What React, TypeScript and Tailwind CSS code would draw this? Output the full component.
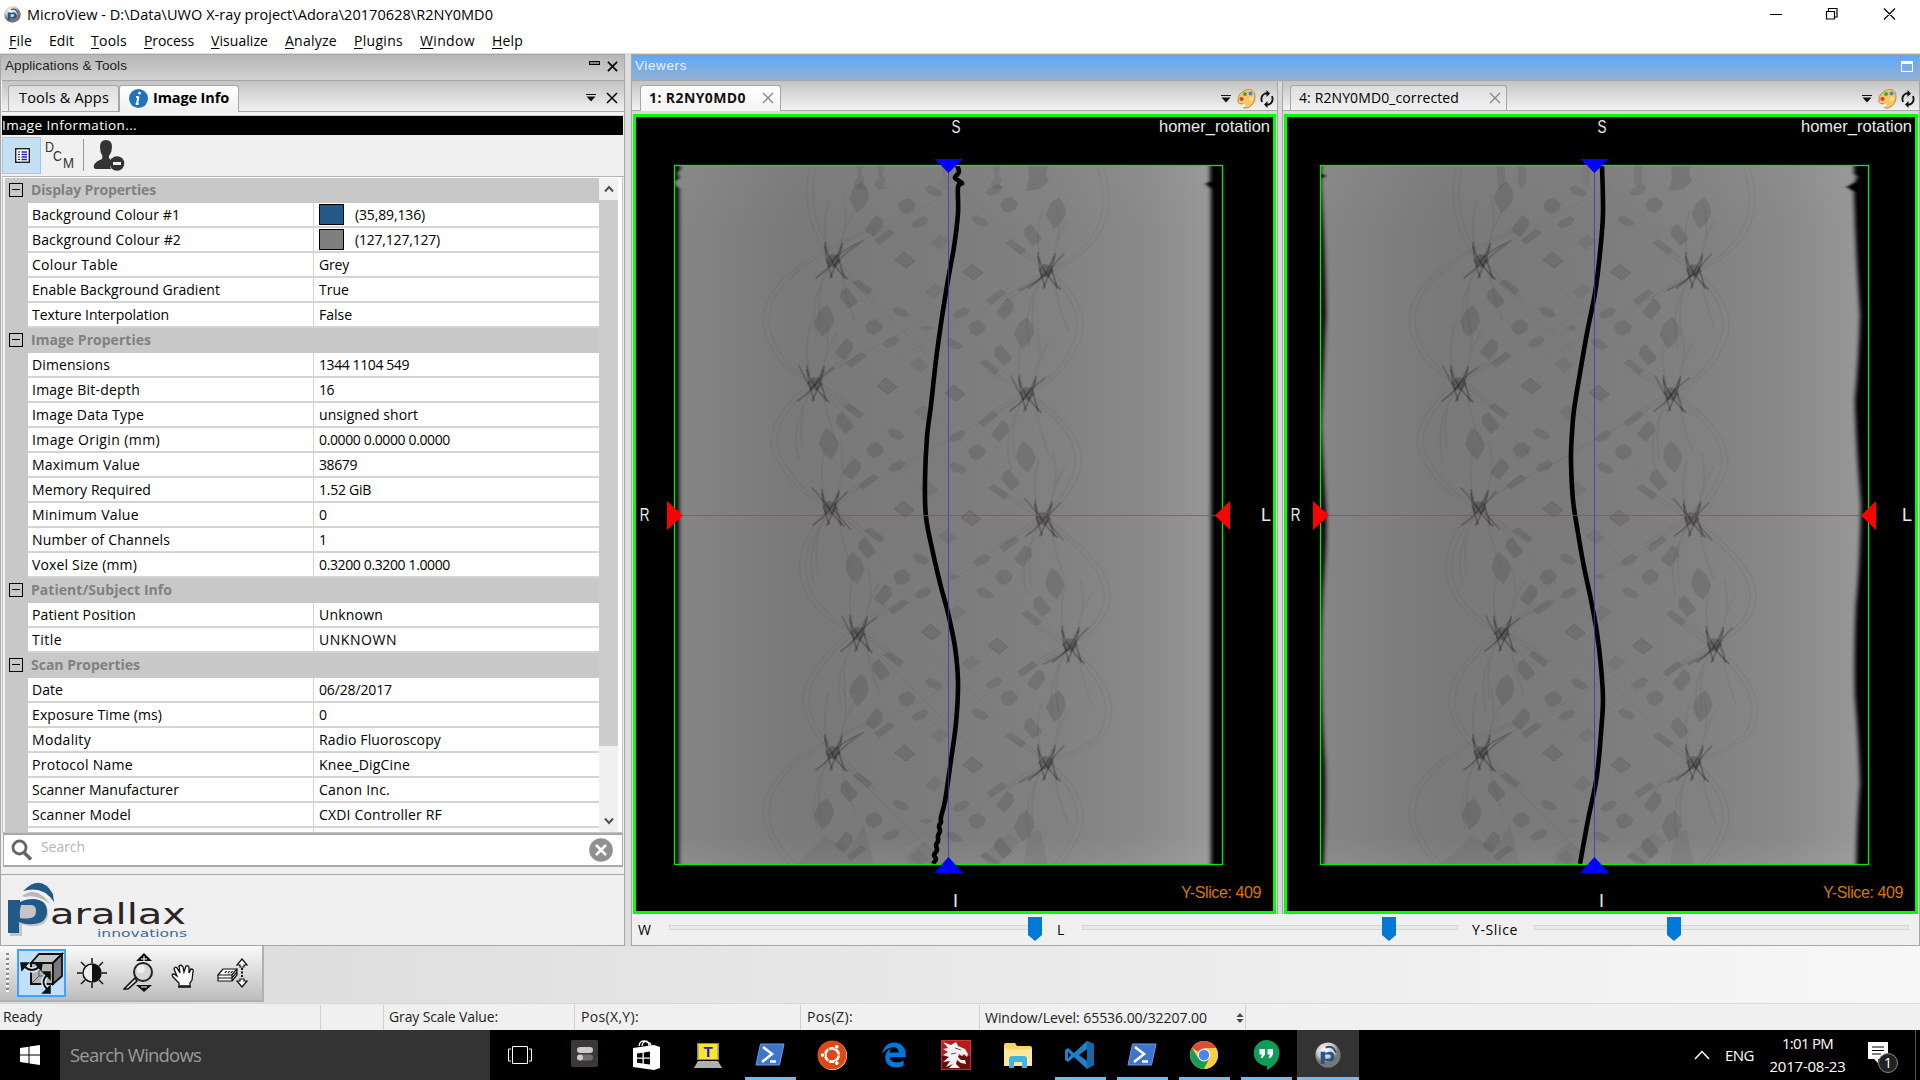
import { useLayoutEffect, useRef } from "react";
import type { ReactNode } from "react";
import { FaEdgeLegacy, FaUbuntu } from "react-icons/fa";

/* Text run whose tracking is adjusted so that it spans a given width. */
function T({ w, className = "", children }: { w: number; className?: string; children: ReactNode }) {
  const ref = useRef<HTMLSpanElement>(null);
  useLayoutEffect(() => {
    const el = ref.current;
    if (!el) return;
    el.style.letterSpacing = "0px";
    const n = (el.textContent || "").length;
    el.style.letterSpacing = `${(w - el.getBoundingClientRect().width) / n}px`;
  }, [w, children]);
  return (
    <span ref={ref} className={"inline-block whitespace-pre " + className}>
      {children}
    </span>
  );
}

type Pt = [number, number];

function smooth(pts: Pt[]): string {
  let d = `M${pts[0][0]} ${pts[0][1]}`;
  for (let i = 0; i < pts.length - 1; i++) {
    const p0 = pts[Math.max(0, i - 1)];
    const p1 = pts[i];
    const p2 = pts[i + 1];
    const p3 = pts[Math.min(pts.length - 1, i + 2)];
    d += `C${(p1[0] + (p2[0] - p0[0]) / 6).toFixed(1)} ${(p1[1] + (p2[1] - p0[1]) / 6).toFixed(1)} ${(p2[0] - (p3[0] - p1[0]) / 6).toFixed(1)} ${(p2[1] - (p3[1] - p1[1]) / 6).toFixed(1)} ${p2[0]} ${p2[1]}`;
  }
  return d;
}

/* t: tall, r: round, s: small, b: block, p: parallelogram, d: diamond, o: outlined diamond, y: tiny */
type Kind = "t" | "r" | "s" | "b" | "p" | "d" | "o" | "y";
type Blob = [Kind, number, number, number];

const BASE: Blob[] = [
  ["t", 185, 32, -1], ["r", 233, 41, 1], ["s", 260, 26, 1], ["s", 320, 25, -1], ["r", 335, 40, 1],
  ["s", 246, 57, -1], ["s", 306, 56, 1], ["t", 382, 48, -1], ["b", 201, 61, -1], ["p", 210, 72, -1],
  ["d", 266, 77, -1], ["b", 358, 70, 1], ["p", 342, 82, 1], ["o", 231, 95, 1], ["o", 299, 107, 1],
  ["p", 189, 122, 1], ["b", 174, 133, 1], ["d", 261, 126, -1], ["p", 322, 132, -1], ["b", 332, 144, -1],
  ["t", 150, 156, -1], ["s", 227, 147, 1], ["r", 200, 162, 1], ["s", 287, 148, -1], ["y", 252, 163, 1],
  ["r", 303, 163, 1], ["s", 217, 177, -1], ["s", 280, 179, 1], ["t", 350, 168, -1], ["b", 171, 184, -1],
  ["p", 182, 195, -1], ["d", 245, 200, 1], ["b", 328, 190, 1], ["p", 316, 202, 1], ["o", 213, 221, 1],
  ["o", 281, 228, 1], ["p", 180, 246, 1], ["b", 170, 258, 1], ["d", 249, 248, 1], ["p", 314, 254, -1],
  ["b", 327, 266, -1], ["t", 155, 279, 1], ["s", 222, 269, 1], ["s", 283, 271, -1], ["r", 201, 285, 1],
  ["r", 303, 287, 1], ["t", 352, 292, 1], ["s", 223, 301, -1], ["s", 284, 303, 1], ["b", 179, 304, -1],
  ["p", 194, 317, -1], ["d", 255, 324, 1], ["b", 336, 315, 1], ["p", 325, 327, 1], ["o", 230, 344, 1],
  ["o", 297, 353, 1], ["p", 201, 370, 1], ["d", 273, 372, 1], ["p", 335, 379, -1], ["b", 192, 383, 1],
  ["b", 350, 391, -1], ["s", 247, 394, 1], ["s", 308, 395, -1], ["t", 181, 403, 1], ["r", 228, 412, 1],
  ["r", 330, 412, 1], ["y", 280, 412, 1], ["t", 381, 419, 1], ["s", 249, 428, -1], ["s", 311, 428, 1],
  ["b", 210, 430, -1], ["p", 224, 442, -1], ["d", 283, 448, -1], ["b", 367, 441, 1], ["p", 358, 453, 1],
  ["o", 257, 467, 1], ["o", 324, 481, 1], ["p", 220, 494, 1], ["b", 206, 505, 1], ["d", 297, 498, -1],
  ["p", 353, 504, -1], ["b", 363, 515, -1],
];
const BLOBS: Blob[] = [
  ...BASE,
  ...BASE.filter((b) => b[2] < 206).map((b): Blob => [b[0], b[1], b[2] + 493, b[3]]),
];

const SHAPES: Record<Kind, { d: string; o: number }> = {
  t: { d: "M-3 -16L5 -10L10 1L7 8L2 16L-6 9L-10 0L-8 -9Z", o: 0.1 },
  r: { d: "M-9 -1L-5 -6L2 -8L9 -2L7 4L0 8L-6 6Z", o: 0.1 },
  s: { d: "M-9 -3L-4 -6L5 -2L9 3L4 6L-5 3Z", o: 0.09 },
  b: { d: "M-7 -7L-1 -11L10 3L8 6L1 11L-8 0Z", o: 0.11 },
  p: { d: "M-11 -4L-5 -8L10 3L5 8Z", o: 0.1 },
  d: { d: "M-10 -1L0 -8L10 1L1 8Z", o: 0.06 },
  o: { d: "M-10 0L-1 -8L10 1L1 8Z", o: 0.09 },
  y: { d: "M-7 0L0 -3L7 0L0 3Z", o: 0.08 },
};

const STARS: [number, number, number][] = [
  [159, 96, 1], [372, 106, -1], [141, 219, 0], [353, 229, 0], [156, 343, 2], [369, 354, 2],
  [184, 469, 0], [396, 480, -1], [159, 588, 1], [372, 598, -1],
];

const WIRE1: Pt[] = [
  [283, 0], [285, 7], [281, 13], [288, 18], [284, 22], [284, 48], [280, 82], [274, 115], [268, 152],
  [262, 195], [257, 240], [253, 272], [251, 315], [252, 352], [259, 388], [267, 422], [274, 448],
  [281, 482], [284, 518], [282, 558], [276, 602], [271, 636], [267, 652], [267, 657], [265, 661],
  [266, 666], [264, 671], [264, 676], [262, 680], [263, 685], [260, 690], [262, 694], [259, 699],
];
const WIRE2: Pt[] = [
  [282, 0], [283, 48], [280, 88], [275, 128], [267, 168], [260, 208], [254, 245], [252, 268], [251, 295],
  [253, 335], [258, 368], [264, 402], [271, 435], [277, 468], [281, 502], [283, 535], [281, 568],
  [278, 602], [275, 622], [268, 655], [260, 699],
];
const LEFT_ARCS = [
  "M136 0Q124 56 159 96Q176 116 196 134",
  "M196 64Q60 118 97 182Q110 208 141 219Q160 232 178 246",
  "M178 190Q70 254 106 300Q122 328 156 343Q180 360 196 376",
  "M186 318Q106 374 132 428Q150 458 184 469Q206 480 222 496",
  "M214 440Q108 508 134 556Q142 574 159 588Q176 606 196 626",
  "M196 556Q60 610 97 674Q104 688 116 699",
];
const RIGHT_ARCS = [
  "M429 0Q450 62 398 96Q380 104 332 136",
  "M346 84Q430 136 402 184Q390 212 353 229L318 250",
  "M318 206Q430 266 402 316Q392 338 369 354L330 380",
  "M328 326Q462 402 430 452Q420 468 396 480L352 506",
  "M360 456Q462 520 430 570Q412 586 372 598L332 626",
  "M346 576Q430 628 402 676Q396 690 386 699",
];

function driftAt(y: number): number {
  const k: Pt[] = [[0, -3], [96, 2], [219, -2], [343, 3], [469, -2], [588, 2], [700, 1]];
  for (let i = 0; i < k.length - 1; i++) {
    if (y <= k[i + 1][0]) {
      const f = (y - k[i][0]) / (k[i + 1][0] - k[i][0]);
      return k[i][1] + f * (k[i + 1][1] - k[i][1]);
    }
  }
  return 0;
}

function Scan({ id, ox, oy, corrected, width }: { id: string; ox: number; oy: number; corrected?: boolean; width: number }) {
  const dx = (y: number) => (corrected ? driftAt(y) : 0);
  return (
    <svg className="block" width={width} height={794} viewBox={`0 0 ${width} 794`}>
      <defs>
        <linearGradient id={id + "g"}>
          <stop offset="0" stopColor="#868686" />
          <stop offset="0.1" stopColor="#808080" />
          <stop offset="0.22" stopColor="#797979" />
          <stop offset="0.45" stopColor="#7b7b7b" />
          <stop offset="0.7" stopColor="#818181" />
          <stop offset="0.85" stopColor="#898989" />
          <stop offset="0.98" stopColor="#979797" />
        </linearGradient>
        <linearGradient id={id + "v"} x2="0" y2="1">
          <stop offset="0" stopColor="#fff" stopOpacity="0.03" />
          <stop offset="0.1" stopColor="#fff" stopOpacity="0" />
          <stop offset="0.96" stopColor="#fff" stopOpacity="0" />
          <stop offset="1" stopColor="#fff" stopOpacity="0.07" />
        </linearGradient>
        <filter id={id + "s"} x="-5%" y="-5%" width="110%" height="110%">
          <feGaussianBlur stdDeviation="0.7" />
        </filter>
        <filter id={id + "e"} x="-300%" y="-2%" width="700%" height="104%">
          <feGaussianBlur stdDeviation="2 0.6" />
        </filter>
        <clipPath id={id + "c"}>
          <rect x="0" y="0" width="548" height="699" />
        </clipPath>
      </defs>
      <g transform={`translate(${ox} ${oy})`}>
        <g clipPath={`url(#${id}c)`}>
          <rect width="548" height="699" fill={`url(#${id}g)`} />
          <rect width="548" height="699" fill={`url(#${id}v)`} />
          <g filter={`url(#${id}s)`} fill="#000">
            <g fill="none" stroke="#000" strokeOpacity="0.045" strokeWidth="1.6">
              {[...LEFT_ARCS, ...RIGHT_ARCS].map((d, i) => (
                <g key={i}>
                  <path d={d} />
                  <path d={d} transform={`translate(${i < 6 ? 6 : -6} 0)`} />
                </g>
              ))}
            </g>
            {STARS.map(([x, y], i) => (
              <g key={i} transform={`translate(${x + dx(y)} ${y})`} fill="none" stroke="#000">
                <g strokeOpacity="0.045" strokeWidth="2">
                  <path d="M-2 5Q-26 40 -16 76M-4 5Q-18 30 -12 66M8 12Q14 40 22 60" />
                  <path d="M3 -6Q18 -36 10 -66M-5 -10Q-12 -36 -4 -60M8 -16Q12 -36 22 -52" />
                </g>
                <path d={x < 250 ? "M8 8L112 112M10 -10L150 -86" : "M-8 -8L-118 -112M-10 8L-150 88"} strokeOpacity="0.045" />
              </g>
            ))}
            {[0, 21, 85, 137].map((x, i) => (
              <path
                key={i}
                fillOpacity={[0.08, 0.08, 0.04, 0.07][i]}
                transform={`translate(${x + dx(0)} 0)`}
                d={corrected
                  ? "M180 0H188V18L184 24L180 18Z"
                  : "M182 0L190 0L187 9L191 14L188 20L193 23L183 25L179 19L184 12Z"}
              />
            ))}
            <path d="M354 0H374L372 9L375 16L366 24L352 26L355 12Z" fillOpacity="0.1" transform={`translate(${dx(0)} 0)`} />
            {BLOBS.map(([k, x, y, s], i) => (
              <path
                key={i}
                d={SHAPES[k].d}
                fillOpacity={SHAPES[k].o}
                stroke={k === "o" ? "#000" : "none"}
                strokeOpacity="0.13"
                transform={`translate(${x + dx(y)} ${y}) scale(${s} 1)`}
              />
            ))}
            <path d="M122 699L150 672L176 682L190 660L200 699Z M232 692L250 676L264 688L256 699H236Z" fillOpacity="0.05" />
            <path d="M306 692L334 668L346 676L326 699Z M350 699L354 670L366 664L374 699Z" fillOpacity="0.05" />
          </g>
          {STARS.map(([x, y, v], i) => (
            <g key={i} transform={`translate(${x + dx(y)} ${y})`}>
              <g fill="none" stroke="#000" strokeLinecap="round" filter={`url(#${id}s)`}>
                <g strokeOpacity="0.22" strokeWidth="2">
                  <path d="M-8 -18Q-7 0 -1 16" />
                  <path d="M9 -17Q8 -6 -3 17" />
                  <path d="M8 -14Q2 4 -17 17" />
                  <path d="M-8 -14Q-2 4 14 18" />
                  <path d="M6 0Q9 8 11 17" />
                </g>
                {v === 0 && <path d="M18 -16Q6 -8 -4 5M-16 -18Q-10 -6 -7 0" strokeOpacity="0.18" strokeWidth="1.8" />}
                {v === 1 && <path d="M-4 2Q10 -12 30 -20M0 5Q14 -10 26 -17" strokeOpacity="0.18" strokeWidth="1.8" />}
                {v === -1 && <path d="M4 0Q-10 12 -26 19M18 -17Q8 -8 2 4" strokeOpacity="0.18" strokeWidth="1.8" />}
                {v === 2 && <path d="M-2 0Q-10 -12 -18 -20M4 2Q12 12 20 21M17 -16L4 -2" strokeOpacity="0.18" strokeWidth="1.8" />}
              </g>
              <path d="M-8 -1L-2 -7L5 -6L8 0L2 7L-5 5Z" fill="#000" fillOpacity="0.2" />
            </g>
          ))}
          <g filter={`url(#${id}e)`} fill="#000">
            {corrected ? (
              <>
                <path d="M-10 -10H1V8L5 11L1 14V24Q5 80 6 150Q4 190 1 260Q3 300 6 345Q7 370 4 410Q1 450 1 500Q2 560 5 600Q6 640 3 710H-10Z" />
                <path d="M560 -10H534V8L537 12L535 17L527 22L534 27Q536 90 540 150Q539 190 535 235Q536 280 541 340Q540 400 536 440Q534 490 535 530Q539 580 540 620Q537 650 536 710H560Z" />
              </>
            ) : (
              <>
                <path d="M-10 -10H6V4L3 8L5 13L0 17L1 20L5 24V710H-10Z" />
                <path d="M560 -10H536V16L532 19L537 24V710H560Z" />
              </>
            )}
          </g>
          <path d={smooth(corrected ? WIRE2 : WIRE1)} fill="none" stroke="#020202" strokeWidth="4.6" strokeLinejoin="round" />
        </g>
        <rect x="0.5" y="0.5" width="548" height="699" fill="none" stroke="#00ee00" strokeWidth="1.3" />
        <path d="M274.5 1V699" stroke="#3a35b4" strokeOpacity="0.75" />
        <path d="M0 350.5H548" stroke="#b83c3c" strokeOpacity="0.75" />
        <path d="M260.500 -6H288.500L274.500 8Z M260 708H289L274.500 692Z" fill="#00f" />
        <path d="M-7 336V365L9 350.5Z M556 336V365L541 350.5Z" fill="#f00" />
      </g>
    </svg>
  );
}

function Viewer({ id, width, ox, left, sx, rx, corrected }: {
  id: string; width: number; ox: number; left: number; sx: number; rx: number; corrected?: boolean;
}) {
  const vtk = "absolute font-['Liberation_Sans'] leading-none text-[#e8e8e8]";
  return (
    <div className="relative h-[800px] border-[3px] border-[#00ff00] bg-black" style={{ width: width + 6 }}>
      <Scan id={id} ox={ox} oy={48} corrected={corrected} width={width} />
      <span className={vtk + " top-[1px] text-[18px] scale-x-75"} style={{ left: sx }}>S</span>
      <span className={vtk + " top-[1px] right-[3px] text-[16.5px]"}><T w={111}>homer_rotation</T></span>
      <span className={vtk + " top-[389px] text-[18px] scale-x-75"} style={{ left }}>R</span>
      <span className={vtk + " top-[389px] text-[18px]"} style={{ left: rx }}>L</span>
      <span className={vtk + " top-[775px] text-[18px]"} style={{ left: sx + 3 }}>I</span>
      <span className={vtk + " top-[768px] right-[12px] text-[16px] !text-[#d87800]"}><T w={80}>Y-Slice: 409</T></span>
    </div>
  );
}

function MicroIcon({ size, id }: { size: number; id: string }) {
  return (
    <svg width={size} height={size} viewBox="0 0 32 32">
      <defs>
        <radialGradient id={id} cx="0.4" cy="0.3">
          <stop offset="0" stopColor="#fff" />
          <stop offset="0.7" stopColor="#c8c8c4" />
          <stop offset="1" stopColor="#777" />
        </radialGradient>
      </defs>
      <circle cx="16" cy="16" r="15.5" fill={`url(#${id})`} />
      <path d="M7 12H13V14Q15 11.500 19 12Q24 13 24 18Q24 23.500 18 24Q15 24 12 22V27H7ZM12.500 15.500V20.500H17Q19.500 20 19.500 18Q19.500 15.500 17 15.500Z" fill="#24568c" />
      <path d="M13 7Q22 3 26 13" stroke="#24568c" strokeWidth="2.500" fill="none" />
    </svg>
  );
}

function Palette() {
  return (
    <svg width="19" height="20" viewBox="0 0 19 20">
      <path d="M9 1C14 -1 18 2 18 8C18 15 12 20 7 19C5 18 8 16 6 15C3 14 1 16 1 11C1 6 4 3 9 1Z" fill="#f6c768" stroke="#b98a3c" />
      <circle cx="8" cy="5" r="2" fill="#3fa83a" />
      <circle cx="13.500" cy="4.500" r="2" fill="#4a7de0" />
      <circle cx="4.500" cy="10" r="2" fill="#e8381c" />
      <circle cx="14" cy="10" r="2" fill="#fbe48a" />
      <circle cx="7" cy="16.500" r="1.400" fill="#fff" />
    </svg>
  );
}

function Refresh() {
  return (
    <svg width="14" height="18" viewBox="0 0 14 18" fill="none" stroke="#111" strokeWidth="1.800">
      <path d="M2 12Q0 6 5 3.500H8M12 6Q14 12 9 14.500H6" />
      <path d="M6.500 0L10 3.500L6.500 7ZM7.500 11L4 14.500L7.500 18Z" fill="#111" stroke="none" />
    </svg>
  );
}

function Drop() {
  return (
    <svg width="10" height="8" viewBox="0 0 10 8">
      <path d="M0 0.500H10" stroke="#111" />
      <path d="M0.500 2.500H9.500L5 7.500Z" fill="#111" />
    </svg>
  );
}

function Cross({ s, c, w }: { s: number; c: string; w: number }) {
  return (
    <svg width={s} height={s} viewBox="0 0 12 12">
      <path d="M1 1L11 11M11 1L1 11" stroke={c} strokeWidth={w} />
    </svg>
  );
}

type Row = { h: string; w: number } | { n: string; nw: number; v: string; vw: number; c?: string };

const ROWS: Row[] = [
  { h: "Display Properties", w: 125 },
  { n: "Background Colour #1", nw: 148, v: "(35,89,136)", vw: 70, c: "#235988" },
  { n: "Background Colour #2", nw: 149, v: "(127,127,127)", vw: 85, c: "#7f7f7f" },
  { n: "Colour Table", nw: 86, v: "Grey", vw: 30 },
  { n: "Enable Background Gradient", nw: 188, v: "True", vw: 30 },
  { n: "Texture Interpolation", nw: 137, v: "False", vw: 33 },
  { h: "Image Properties", w: 120 },
  { n: "Dimensions", nw: 78, v: "1344 1104 549", vw: 90 },
  { n: "Image Bit-depth", nw: 108, v: "16", vw: 15 },
  { n: "Image Data Type", nw: 112, v: "unsigned short", vw: 99 },
  { n: "Image Origin (mm)", nw: 128, v: "0.0000 0.0000 0.0000", vw: 131 },
  { n: "Maximum Value", nw: 108, v: "38679", vw: 38 },
  { n: "Memory Required", nw: 119, v: "1.52 GiB", vw: 52 },
  { n: "Minimum Value", nw: 107, v: "0", vw: 8 },
  { n: "Number of Channels", nw: 138, v: "1", vw: 8 },
  { n: "Voxel Size (mm)", nw: 105, v: "0.3200 0.3200 1.0000", vw: 131 },
  { h: "Patient/Subject Info", w: 141 },
  { n: "Patient Position", nw: 104, v: "Unknown", vw: 64 },
  { n: "Title", nw: 30, v: "UNKNOWN", vw: 78 },
  { h: "Scan Properties", w: 109 },
  { n: "Date", nw: 31, v: "06/28/2017", vw: 73 },
  { n: "Exposure Time (ms)", nw: 130, v: "0", vw: 8 },
  { n: "Modality", nw: 59, v: "Radio Fluoroscopy", vw: 122 },
  { n: "Protocol Name", nw: 101, v: "Knee_DigCine", vw: 91 },
  { n: "Scanner Manufacturer", nw: 147, v: "Canon Inc.", vw: 71 },
  { n: "Scanner Model", nw: 99, v: "CXDI Controller RF", vw: 123 },
];

function PropertyGrid() {
  return (
    <div className="flex h-[654px] w-[618px] overflow-hidden bg-[#c8c8c8]">
      <div className="w-[594px] shrink-0">
        {ROWS.map((r, i) =>
          "h" in r ? (
            <div key={i} className="flex h-[25px] items-center pb-[2px]">
              <div className="flex w-[26px] pl-[4px]">
                <span className="flex h-[14px] w-[14px] items-center justify-center border border-black">
                  <span className="h-px w-[8px] bg-black" />
                </span>
              </div>
              <T w={r.w} className="font-bold text-[#808080]">{r.h}</T>
            </div>
          ) : (
            <div key={i} className="flex h-[25px] pl-[23px]">
              <div className="flex w-[286px] items-center border-b-2 border-r border-[#d4d4d4] bg-white pl-[4px]">
                <T w={r.nw}>{r.n}</T>
              </div>
              <div className="flex flex-1 items-center border-b-2 border-[#d4d4d4] bg-white pl-[5px]">
                {r.c && <span className="mr-[11px] h-[21px] w-[25px] border border-black" style={{ backgroundColor: r.c }} />}
                <T w={r.vw}>{r.v}</T>
              </div>
            </div>
          ),
        )}
        <div className="flex h-[25px] pl-[23px]">
          <div className="w-[286px] border-r border-[#d4d4d4] bg-white" />
          <div className="flex-1 bg-white" />
        </div>
      </div>
      <div className="flex w-[19px] flex-col items-center justify-between bg-[#f0f0f0]">
        <svg className="my-[7px] shrink-0" width="10" height="8" viewBox="0 0 10 8"><path d="M1 6.500L5 2L9 6.500" fill="none" stroke="#505050" strokeWidth="2" /></svg>
        <div className="h-[546px] w-full shrink-0 bg-[#cdcdcd]" />
        <div className="flex-1" />
        <svg className="mb-[7px] shrink-0" width="10" height="8" viewBox="0 0 10 8"><path d="M1 1.500L5 6L9 1.500" fill="none" stroke="#505050" strokeWidth="2" /></svg>
      </div>
      <div className="flex-1 bg-white" />
    </div>
  );
}

function ParallaxLogo() {
  return (
    <svg className="block" width="195" height="70" viewBox="0 0 195 70" fontFamily="DejaVu Sans">
      <g transform="translate(6 6)">
        <path d="M2 20H14V24Q18 19 26 19Q40 20 40 31Q40 43 28 44Q20 45 14 42V54H2Z" fill="#9a9a9a" opacity="0.5" transform="translate(1 1)" />
        <path d="M1 19H13V21Q18 18 27 18Q40 19 40 30Q40 42 27 43Q18 44 12 41V52H1ZM14 24Q12 30 13 37Q17 38 24 37Q29 36 29 30Q29 24 24 24Z" fill="#215988" fillRule="evenodd" />
        <path d="M16 10Q34 -8 46 13L47 21Q36 4 16 10Z" fill="#215988" />
        <path d="M15 15Q30 4 43 23Q30 13 18 16Z" fill="#b9b9b9" />
      </g>
      <text x="49" y="49" fontSize="28" fill="#2b2527" textLength="136" lengthAdjust="spacingAndGlyphs">arallax</text>
      <text x="96" y="62" fontSize="11" fill="#3c6c9b" textLength="90" lengthAdjust="spacingAndGlyphs">innovations</text>
    </svg>
  );
}

function ToolStrip() {
  return (
    <div className="flex h-[56px] w-[264px] items-center border-b-2 border-r-2 border-[#b0b0b0] bg-gradient-to-b from-[#fafafa] to-[#bdbdbd]">
      <div className="ml-[6px] mr-[8px] h-[40px] w-[3px] bg-[repeating-linear-gradient(#888_0_2px,#fff_2px_4px,transparent_4px_5px)]" />
      <div className="flex h-[48px] w-[49px] shrink-0 items-center justify-center border-2 border-[#45a1f8] bg-[#c2dffc]">
        <svg width="44" height="42" viewBox="0 0 44 42" fill="none" stroke="#111" strokeWidth="1.500">
          <path d="M11 11H33V32H11Z" fill="#b4b4b4" strokeWidth="2" />
          <path d="M11 11L19 2H42L33 11Z" fill="#c8c8c8" strokeWidth="1.800" />
          <path d="M33 11L42 2V24L33 32Z" fill="#7a7a7a" strokeWidth="1.800" />
          <path d="M19 12V24H32M19 24L12 31" stroke="#555" strokeWidth="1" />
          <path d="M4 14Q12 22 20 14" stroke="#dbe8f5" strokeWidth="5" /><path d="M4 14Q12 22 20 14" strokeWidth="1.800" />
          <path d="M1 11H8L2 18ZM22 11H15L21 18Z" fill="#111" />
          <path d="M27 23Q20 30 27 37" stroke="#dbe8f5" strokeWidth="5" /><path d="M27 23Q20 30 27 37" strokeWidth="1.800" />
          <path d="M23 20H30V27ZM23 41H30V34Z" fill="#111" />
        </svg>
      </div>
      <svg className="ml-[10px] shrink-0" width="32" height="32" viewBox="0 0 32 32">
        <g stroke="#111" strokeWidth="1.500"><path d="M16 1V6M16 26V31M1 16H6M26 16H31M5 5L9 9M23 23L27 27M27 5L23 9M9 23L5 27" /></g>
        <circle cx="16" cy="16" r="9" fill="#eee" stroke="#111" strokeWidth="1.500" />
        <path d="M16 7A9 9 0 0 1 16 25Z" fill="#111" />
      </svg>
      <svg className="ml-[15px] shrink-0" width="32" height="40" viewBox="0 0 32 40">
        <path d="M21 0L29 8H13ZM21 39L29 32H13Z" fill="#111" />
        <path d="M21 3V8M18 6H24M18 34H24" stroke="#fff" strokeWidth="1" />
        <path d="M1 36L12 25L14 28L5 36Z" fill="#ddd" stroke="#111" strokeWidth="1.500" />
        <circle cx="20" cy="19" r="9" fill="#d6d6d6" stroke="#222" strokeWidth="2" />
        <circle cx="18" cy="16" r="4" fill="#f0f0f0" />
      </svg>
      <svg className="ml-[16px] mt-[5px] shrink-0" width="24" height="24" viewBox="0 0 24 24">
        <path d="M8 22V19L2 13Q0 10 3 10L6 12L3 5Q4 2 6 4L9 9L8 2Q10 0 12 3L13 8L15 2Q18 1 18 4V9L20 5Q23 5 22 8L21 16L19 19V22Z" fill="#fff" stroke="#111" strokeWidth="1.300" />
        <path d="M7 23H20" stroke="#111" strokeWidth="1.500" />
      </svg>
      <svg className="ml-[22px] shrink-0" width="32" height="30" viewBox="0 0 32 30" fill="#fff" stroke="#111" strokeWidth="1.200">
        <path d="M1 17L6 11H20L15 17ZM1 17V23H15V17M1 20H15L20 14V11M15 23L20 17V14" />
        <path d="M8 15L9.500 13M11 15L12.500 13M14 15L15.500 13" />
        <path d="M25 1L30 7H27V9H23V7H20ZM25 29L30 23H27V21H23V23H20Z" />
        <path d="M25 10V20" strokeDasharray="2 1.500" strokeWidth="2" />
      </svg>
    </div>
  );
}

function Slider({ label, lw, w, x, mx }: { label: string; lw: number; w: number; x: number; mx: string }) {
  return (
    <div className="flex items-center">
      <T w={lw} className={mx}>{label}</T>
      <div className="relative mb-[4px] h-[5px] border border-[#d6d6d6] bg-[#e7eaea]" style={{ width: w }}>
        <svg className="absolute -top-[9px]" style={{ left: x }} width="14" height="24" viewBox="0 0 14 24">
          <path d="M0 0H14V18L7 24L0 18Z" fill="#0078d7" />
        </svg>
      </div>
    </div>
  );
}

function Task({ on, active, children }: { on?: boolean; active?: boolean; children?: ReactNode }) {
  return (
    <div className={"relative flex h-[50px] w-[62px] items-center justify-center " + (active ? "bg-[#333]" : "")}>
      {children}
      {(on || active) && <div className={"absolute bottom-0 h-[3px] bg-[#76b9ed] " + (active ? "w-full" : "w-[51px]")} />}
    </div>
  );
}

function PowerShell() {
  return (
    <svg width="30" height="24" viewBox="0 0 30 24">
      <path d="M5.500 1H29L24.500 22H1Z" fill="#3f74cc" stroke="#6f9be0" />
      <path d="M8 4L17 11L7 19M15 18.500H21" fill="none" stroke="#fff" strokeWidth="2.500" />
    </svg>
  );
}

function Taskbar() {
  return (
    <div className="flex h-[50px] bg-black text-white">
      <div className="flex w-[60px] items-center justify-center">
        <svg width="20" height="20" viewBox="0 0 20 20" fill="#fff"><path d="M0 3L8.500 1.700V9.500H0ZM9.500 1.500L20 0V9.500H9.500ZM0 10.500H8.500V18.300L0 17ZM9.500 10.500H20V20L9.500 18.500Z" /></svg>
      </div>
      <div className="flex w-[430px] items-center bg-[#333] pl-[10px] text-[18.500px] text-[#9c9c9c]"><T w={131}>Search Windows</T></div>
      <div className="ml-[1px] flex">
        <Task><svg className="mr-[4px]" width="24" height="20" viewBox="0 0 24 20" fill="none" stroke="#fff"><path d="M4.500 1.500H19.500V18.500H4.500ZM3 4H0.500V16H3M21 4H23.500V16H21" /></svg></Task>
        <Task>
          <svg className="mb-1" width="27" height="27" viewBox="0 0 27 27">
            <rect width="27" height="27" rx="2" fill="#3d3838" />
            <rect x="6" y="7" width="16" height="6" rx="3" fill="#ccc" /><rect x="6" y="14.500" width="16" height="6" rx="3" fill="#707070" />
            <circle cx="9" cy="17.500" r="3" fill="#ccc" />
          </svg>
        </Task>
        <Task>
          <svg width="27" height="30" viewBox="0 0 27 30">
            <path d="M6 6Q7 0 12 1Q16 1 16 6M9 6Q10 0 14 2Q18 3 18 6" fill="none" stroke="#fff" strokeWidth="1.300" />
            <path d="M0 8L21 5V30L0 27Z" fill="#fff" /><path d="M21 5L27 7V28L21 30Z" fill="#fff" />
            <path d="M4 13.500L9.500 12.700V17.500H4ZM10.800 12.500L17 11.600V17.500H10.800ZM4 18.800H9.500V23.500L4 22.800ZM10.800 18.800H17V24.600L10.800 23.700Z" fill="#000" />
          </svg>
        </Task>
        <Task>
          <svg width="28" height="25" viewBox="0 0 28 25">
            <rect x="3" y="0" width="22" height="17" fill="#888" /><rect x="4.500" y="1" width="19" height="15" fill="#f7e531" />
            <path d="M4 18H24L28 25H0Z" fill="#b0b0b0" />
            <text x="14" y="14" textAnchor="middle" fontFamily="Liberation Sans" fontWeight="bold" fontSize="15" fill="#1a1acc">T</text>
          </svg>
        </Task>
        <Task on><PowerShell /></Task>
        <Task>
          <div className="flex h-[29px] w-[29px] items-center justify-center rounded-full bg-white"><FaUbuntu size={30} color="#dd4814" className="shrink-0" /></div>
        </Task>
        <Task><FaEdgeLegacy size={26} color="#0078d7" /></Task>
        <Task>
          <svg width="30" height="30" viewBox="0 0 30 30">
            <rect width="30" height="30" rx="1" fill="#b71c1c" /><path d="M0 16H30V30H0Z" fill="#6d0d0d" />
            <path d="M2 2L10 5L15 2L17 6L24 9L27 14L26 17L23 14L21 16L18 14L17 17L20 20L24 20L25 24L20 23L16 20L15 24L19 28H8L12 24L5 27L9 21L2 22L8 17L2 15L7 12L2 9L7 8Z" fill="#f2f2f2" />
            <path d="M14 8L20 10M10 14L15 13" stroke="#555" />
            <rect x="0.500" y="0.500" width="29" height="29" fill="none" stroke="#e05050" strokeOpacity="0.600" />
          </svg>
        </Task>
        <Task>
          <svg width="28" height="25" viewBox="0 0 28 25">
            <path d="M0 2Q0 0 2 0H11L13 3H26Q28 3 28 5V23H0Z" fill="#fcd467" /><path d="M0 6H28V23H0Z" fill="#ffe79b" />
            <path d="M5 25V16Q5 13 8 13H20Q23 13 23 16V25H18V19H10V25Z" fill="#3fb4e8" />
          </svg>
        </Task>
        <Task on>
          <svg width="30" height="30" viewBox="0 0 30 30">
            <path d="M22 1L29 4V25L22 29L9 17L3 22L0 20V10L3 8L9 13ZM22 9L14 15L22 21ZM3 12V18L6 15Z" fill="#1f82c8" fillRule="evenodd" />
            <path d="M22 1L29 4V25L22 29Z" fill="#1568a8" />
          </svg>
        </Task>
        <Task on><PowerShell /></Task>
        <Task on>
          <svg width="28" height="28" viewBox="0 0 28 28">
            <circle cx="14" cy="14" r="14" fill="#ffcd40" />
            <path d="M14 14L1.900 7A14 14 0 0 1 26.100 7L14 7.500Z" fill="#dd4b3e" />
            <path d="M1.900 7A14 14 0 0 0 14 28L19.600 17.200L14 14L8.400 17.200Z" fill="#1a9c58" />
            <path d="M26.100 7H14V14L19.600 17.200L14 28A14 14 0 0 0 26.100 7Z" fill="#ffcd40" />
            <circle cx="14" cy="14" r="6.500" fill="#f1f1f1" /><circle cx="14" cy="14" r="5.200" fill="#4a86f0" />
          </svg>
        </Task>
        <Task on>
          <svg width="27" height="30" viewBox="0 0 27 30">
            <path d="M13.500 0A13 13 0 0 1 26.500 13Q26 24 14 30V26A13 13 0 0 1 13.500 0Z" fill="#0f9d58" />
            <path d="M6.500 9H12V14.500L9.500 18H7.500L9 14.500H6.500ZM14.500 9H20V14.500L17.500 18H15.500L17 14.500H14.500Z" fill="#fff" />
          </svg>
        </Task>
        <Task active><MicroIcon size={26} id="mi2" /></Task>
      </div>
      <div className="ml-auto flex items-center text-[15px]">
        <svg className="mr-[15px]" width="16" height="10" viewBox="0 0 16 10"><path d="M1 9L8 1.500L15 9" fill="none" stroke="#fff" strokeWidth="1.500" /></svg>
        <T w={29}>ENG</T>
        <div className="ml-[15px] flex w-[77px] flex-col items-center leading-[23px]">
          <T w={51}>1:01 PM</T>
          <T w={76}>2017-08-23</T>
        </div>
        <div className="relative ml-[22px] h-[26px] w-[30px]">
          <svg width="22" height="22" viewBox="0 0 22 22"><path d="M0 0H20V17H10L10 21L6 17H0Z" fill="#fff" /><path d="M4 5H16M4 8.500H16M4 12H13" stroke="#000" strokeWidth="1.200" /></svg>
          <div className="absolute left-[10px] top-[11px] flex h-[20px] w-[20px] items-center justify-center rounded-full border border-[#888] bg-[#222] text-[14px] leading-none">1</div>
        </div>
        <div className="ml-[17px] mr-[4px] h-[50px] w-px bg-[#555]" />
      </div>
    </div>
  );
}

const MENUS: [string, number][] = [
  ["File", 23], ["Edit", 25], ["Tools", 36], ["Process", 50], ["Visualize", 57],
  ["Analyze", 52], ["Plugins", 49], ["Window", 55], ["Help", 31],
];

export default function App() {
  return (
    <div className="flex h-[1080px] w-[1920px] flex-col overflow-hidden bg-[#dcdcdc] font-['Open_Sans','Noto_Sans',sans-serif] text-[14px] leading-[20px] text-black">
      <div className="flex h-[29px] shrink-0 items-center bg-white pl-[4px]">
        <MicroIcon size={17} id="mi1" />
        <T w={466} className="ml-[6px] text-[14.500px]">MicroView - D:\Data\UWO X-ray project\Adora\20170628\R2NY0MD0</T>
        <svg className="mb-px ml-auto mr-[23px]" width="128" height="14" viewBox="0 0 128 14" fill="none" stroke="#000" strokeWidth="1.200">
          <path d="M1 7.500H13M57.500 4.500H65.500V12H57.500ZM59.500 4V1.500H68V10H66M115 1.500L126 12.500M126 1.500L115 12.500" />
        </svg>
      </div>
      <div className="flex h-[24px] shrink-0 items-center gap-[17px] bg-white pl-[9px]">
        {MENUS.map(([m, w]) => (
          <T key={m} w={w}>
            <u className="underline-offset-2">{m === "Edit" ? "" : m[0]}</u>{m === "Edit" ? m : m.slice(1)}
          </T>
        ))}
      </div>

      <div className="flex h-[893px] shrink-0 pt-px">
        <div className="flex w-[625px] flex-col border border-[#a6a6a6] bg-[#f0f0f0]">
          <div className="flex h-[25px] items-center justify-between bg-gradient-to-b from-[#b6b6b6] to-[#d2d2d2] pb-[3px] pl-[4px] pr-[6px]">
            <T w={122} className="font-['Liberation_Sans'] text-[13.500px] text-[#222]">Applications &amp; Tools</T>
            <div className="flex items-center gap-[7px]">
              <span className="mb-[6px] h-[4px] w-[11px] border border-black bg-[#888]" />
              <Cross s={11} c="#000" w={1.8} />
            </div>
          </div>
          <div className="ml-px flex h-[36px] items-start border-y border-[#a6a6a6] border-b-[#d0d0d0] bg-gradient-to-b from-[#c4c4c4] to-[#f6f6f6]">
            <div className="flex h-[31px] flex-1 items-end border-b border-[#a6a6a6] pl-[6px]">
              <div className="flex h-[26px] w-[111px] items-center rounded-t-[3px] border border-b-0 border-[#a6a6a6] bg-gradient-to-b from-[#dedede] to-[#f0f0f0] pb-[2px] pl-[10px]">
                <T w={90} className="text-[14.500px]">Tools &amp; Apps</T>
              </div>
              <div className="-mb-px flex h-[27px] w-[120px] items-center gap-[5px] rounded-t-[3px] border border-b-0 border-[#a6a6a6] bg-gradient-to-b from-white to-[#f0f0f0] pb-[2px] pl-[9px]">
                <svg width="19" height="19" viewBox="0 0 19 19"><circle cx="9.500" cy="9.500" r="9.500" fill="#1e73be" /><path d="M9.500 7.500L8 15M7 8H9.700M6.700 15H9.600" stroke="#fff" strokeWidth="2" /><circle cx="10.500" cy="4.200" r="1.400" fill="#fff" /></svg>
                <T w={76} className="text-[14.500px] font-bold">Image Info</T>
              </div>
              <div className="mb-[7px] ml-auto mr-[6px] flex items-center gap-[10px]"><Drop /><Cross s={12} c="#000" w={1.5} /></div>
            </div>
          </div>
          <div className="ml-px mr-[1px] h-[19px] bg-black leading-[18px] text-white"><T w={135} className="text-[13.500px]">Image Information...</T></div>
          <div className="ml-px flex h-[42px] items-center border-b border-[#b4b4b4] pb-px">
            <div className="flex h-[37px] w-[39px] items-center justify-center border border-[#99c9ee] bg-[#c5e0f5] pl-px">
              <svg width="15" height="15" viewBox="0 0 15 15"><rect x="0.700" y="0.700" width="13.600" height="13.600" fill="#fff" stroke="#222" strokeWidth="1.400" /><path d="M3 4H5M3 6.500H5M3 9H5M3 11.500H5" stroke="#222" /><path d="M6.500 4H12M6.500 6.500H12M6.500 9H12M6.500 11.500H12" stroke="#2222c8" strokeWidth="1.400" /></svg>
            </div>
            <svg className="ml-[4px]" width="30" height="36" viewBox="0 0 30 36" fontFamily="Liberation Sans" fontSize="15" fill="#333">
              <text x="0" y="15" textLength="9" lengthAdjust="spacingAndGlyphs">D</text><text x="8" y="24" textLength="9" lengthAdjust="spacingAndGlyphs">C</text><text x="18" y="31" textLength="11" lengthAdjust="spacingAndGlyphs">M</text>
            </svg>
            <span className="ml-[8px] mr-[9px] h-[32px] w-px bg-[#999]" />
            <svg width="32" height="31" viewBox="0 0 32 31" fill="#333">
              <path d="M13 0Q19 0 19 7Q19 12 16 16Q15 19 19 20Q16 25 18 29H3Q0 29 1 25Q3 21 9 19Q10 17 9 15Q7 12 7 7Q7 0 13 0Z" />
              <circle cx="24" cy="23.500" r="7.300" /><path d="M20 23.500H28" stroke="#f0f0f0" strokeWidth="3" />
            </svg>
          </div>
          <div className="ml-px mr-px flex h-[656px] border border-[#c4c4c4] border-t-white pl-[2px]"><PropertyGrid /></div>
          <div className="ml-[2px] mr-px flex h-[34px] items-center border-[#a8a8b0] border-y-2 border-x bg-white pl-[7px] pr-[9px]">
            <svg width="22" height="22" viewBox="0 0 22 22" fill="none" stroke="#666"><circle cx="8.500" cy="8.500" r="6.500" strokeWidth="2.800" /><path d="M13.500 14L20 20.500" strokeWidth="3.500" /></svg>
            <T w={44} className="mb-[7px] ml-[8px] text-[#b4b4b4]">Search</T>
            <svg className="ml-auto" width="24" height="24" viewBox="0 0 24 24"><circle cx="12" cy="12" r="11.800" fill="#909090" /><path d="M7 7L17 17M17 7L7 17" stroke="#fff" strokeWidth="2.600" /></svg>
          </div>
          <div className="h-[8px] shrink-0 border-b border-[#a6a6a6]" />
          <ParallaxLogo />
        </div>

        <div className="ml-[6px] flex w-[1289px] flex-col border border-[#a6a6a6] bg-[#d8d8d8]">
          <div className="flex h-[25px] items-center justify-between bg-gradient-to-b from-[#5ba8fa] to-[#92b0d2] pb-[3px] pl-[3px] pr-[6px]">
            <T w={52} className="font-['Liberation_Sans'] text-[13.500px] text-[#e8f1fb]">Viewers</T>
            <span className="h-[11px] w-[12px] border border-t-[3px] border-white" />
          </div>
          <div className="flex h-[34px] border-t border-[#a6a6a6]">
            <div className="flex h-[30px] w-[645px] items-end border-b border-[#a6a6a6] bg-gradient-to-b from-[#c4c4c4] to-[#f2f2f2] pl-[8px] pr-[3px]">
              <div className="-mb-px flex h-[26px] w-[141px] items-center justify-between rounded-t-[3px] border border-b-0 border-[#a6a6a6] bg-gradient-to-b from-white to-[#f4f4f4] pb-px pl-[8px] pr-[6px]">
                <T w={97} className="font-bold text-[#181010]">1: R2NY0MD0</T><Cross s={12} c="#888" w={1.4} />
              </div>
              <div className="mb-[1px] ml-auto flex items-center gap-[6px]"><Drop /><Palette /><span className="-ml-[2px]"><Refresh /></span></div>
            </div>
            <div className="flex h-[34px] w-[6px] border-x border-[#a6a6a6] bg-[#d8d8d8]" />
            <div className="flex h-[30px] flex-1 items-end border-b border-[#a6a6a6] bg-gradient-to-b from-[#c4c4c4] to-[#f2f2f2] pl-[7px] pr-[4px]">
              <div className="flex h-[25px] w-[217px] items-center justify-between rounded-t-[3px] border border-b-0 border-[#a6a6a6] bg-gradient-to-b from-[#dedede] to-[#f2f2f2] pb-px pl-[8px] pr-[5px]">
                <T w={160}>4: R2NY0MD0_corrected</T><Cross s={12} c="#888" w={1.4} />
              </div>
              <div className="mb-[1px] ml-auto flex items-center gap-[6px]"><Drop /><Palette /><span className="-ml-[2px]"><Refresh /></span></div>
            </div>
          </div>
          <div className="flex pl-px">
            <Viewer id="a" width={637} ox={38} left={2} sx={314} rx={625} />
            <div className="mx-[1px] w-[6px] border-x border-[#a6a6a6] bg-[#d8d8d8]" />
            <Viewer id="b" width={628} ox={33} left={2} sx={309} rx={615} corrected />
          </div>
          <div className="flex flex-1 items-center bg-[#f0f0f0]">
            <Slider label="W" lw={14} w={373} x={358} mx="ml-[6px] mr-[17px]" />
            <Slider label="L" lw={7} w={376} x={299} mx="ml-[15px] mr-[18px]" />
            <Slider label="Y-Slice" lw={46} w={375} x={132} mx="ml-[14px] mr-[16px]" />
          </div>
        </div>
      </div>

      <div className="h-[57px] shrink-0 bg-gradient-to-r from-[#dadada] to-[#f7f7f7]"><ToolStrip /></div>
      <div className="flex h-[27px] shrink-0 border-t border-[#d8d8d8] bg-[#f0f0f0] pt-px leading-[24px] text-[#222]">
        <div className="w-[321px] border-r border-[#d0d0d0] pl-[3px]"><T w={39}>Ready</T></div>
        <div className="w-[63px] border-r border-[#d0d0d0]" />
        <div className="w-[191px] border-r border-[#d0d0d0] pl-[5px]"><T w={109}>Gray Scale Value:</T></div>
        <div className="w-[226px] border-r border-[#d0d0d0] pl-[6px]"><T w={58}>Pos(X,Y):</T></div>
        <div className="w-[179px] border-r border-[#d0d0d0] pl-[6px]"><T w={46}>Pos(Z):</T></div>
        <div className="flex w-[266px] items-center justify-between border-r border-[#d0d0d0] pl-[5px] pr-[1px]">
          <T w={222}>Window/Level: 65536.00/32207.00</T>
          <svg width="8" height="12" viewBox="0 0 8 12"><path d="M4 1L7.500 5H0.500ZM4 11L7.500 7H0.500Z" fill="#444" /></svg>
        </div>
      </div>
      <Taskbar />
    </div>
  );
}
